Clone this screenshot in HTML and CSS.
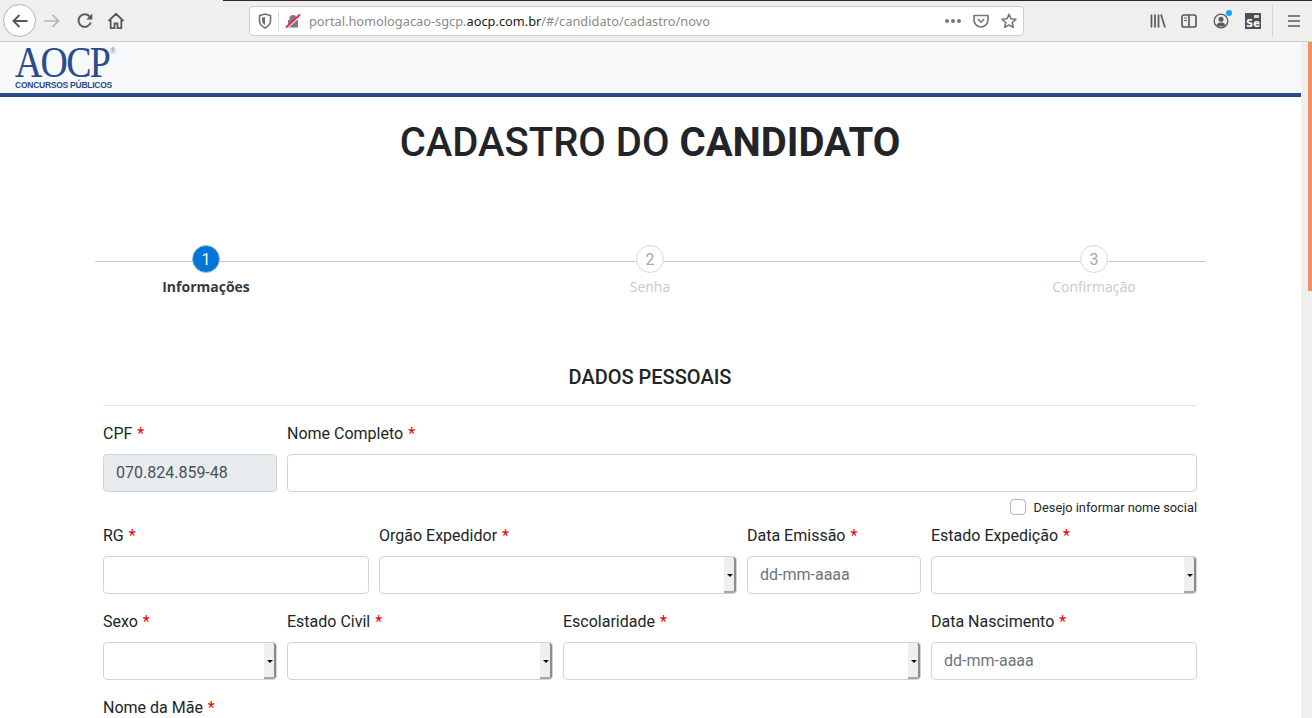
FILE: index.html
```html
<!DOCTYPE html>
<html lang="pt-BR">
<head>
    <meta charset="UTF-8">
    <meta name="viewport" content="width=device-width, initial-scale=1.0">
    <title>Cadastro do Candidato</title>
    <link rel="stylesheet" href="styles.css">
</head>
<body>
    <div class="toolbar">
        <button class="nav-back" type="button">
            <svg width="18" height="18" viewBox="0 0 18 18"><path d="M16.500 9H2.500M8.500 3 2.500 9l6 6" fill="none" stroke="#555" stroke-width="1.900"/></svg>
        </button>
        <span class="nav-icon nav-forward">
            <svg width="18" height="18" viewBox="0 0 18 18"><path d="M1 9h14.500M9.500 3l6 6-6 6" fill="none" stroke="#b4b4b4" stroke-width="1.700"/></svg>
        </span>
        <span class="nav-icon nav-reload">
            <svg width="18" height="18" viewBox="0 0 18 18"><path d="M14.800 10.500A6.300 6.300 0 1 1 13.500 4.300L15.500 6.500" fill="none" stroke="#5b5b5b" stroke-width="1.900"/><path d="M16.300 1.500v6h-6z" fill="#5b5b5b"/></svg>
        </span>
        <span class="nav-icon nav-home">
            <svg width="18" height="18" viewBox="0 0 18 18"><path d="M1.500 9 9 1.800 16.500 9M3.700 8v8.200h3.800v-4.700h3v4.700h3.800V8" fill="none" stroke="#5b5b5b" stroke-width="1.800"/></svg>
        </span>
        <div class="urlbar">
            <svg class="url-shield" width="14" height="16" viewBox="0 0 14 16"><path d="M1.500 2.500 7 1l5.500 1.500V8c0 3-2.500 5.500-5.500 7C4 13.500 1.500 11 1.500 8z" fill="none" stroke="#707070" stroke-width="1.600"/><path d="M7 4v8C5.300 11 4 9.500 4 7.500V4.500z" fill="#707070"/></svg>
            <span class="url-sep"></span>
            <svg class="url-lock" width="16" height="16" viewBox="0 0 16 16"><path d="M4.500 7V5.500a3.500 3.500 0 0 1 7 0V7h1.500v7.500H3V7z" fill="#7a7a7a"/><path d="M1 15.500 15 2.500" stroke="#fff" stroke-width="2.500"/><path d="M1 14.500 15 1.500" stroke="#f0244f" stroke-width="2"/></svg>
            <span class="url-text">portal.homologacao-sgcp.<b>aocp.com.br</b>/#/candidato/cadastro/novo</span>
            <span class="url-dots"><i></i><i></i><i></i></span>
            <svg class="url-pocket" width="16" height="16" viewBox="0 0 16 16"><path d="M1 2.500h14V7a7 7 0 0 1-14 0z" fill="none" stroke="#777" stroke-width="1.700" stroke-linejoin="round"/><path d="M4.800 6 8 9l3.200-3" fill="none" stroke="#777" stroke-width="1.700"/></svg>
            <svg class="url-star" width="16" height="16" viewBox="0 0 16 16"><path d="M8 1.300l2 4.500 4.900.5-3.700 3.200 1.100 4.900L8 12l-4.300 2.400 1.100-4.900L1.100 6.300 6 5.800z" fill="none" stroke="#777" stroke-width="1.600" stroke-linejoin="round"/></svg>
        </div>
        <div class="tools">
            <svg width="16" height="16" viewBox="0 0 16 16"><path d="M1.500 1.500v13M5 1.500v13M8.500 1.500v13M11 1.500l4 13" fill="none" stroke="#5b5b5b" stroke-width="1.700"/></svg>
            <svg class="tool-sidebar" width="16" height="16" viewBox="0 0 16 16"><rect x="1" y="2" width="14" height="12" rx="2" fill="none" stroke="#5b5b5b" stroke-width="1.700"/><path d="M8 2v12" stroke="#5b5b5b" stroke-width="1.700"/><path d="M3 5h3M3 7.500h3" stroke="#5b5b5b" stroke-width="1.200"/></svg>
            <span class="tool-account">
                <svg width="16" height="16" viewBox="0 0 16 16"><circle cx="8" cy="8" r="6.800" fill="none" stroke="#5b5b5b" stroke-width="1.300"/><circle cx="8" cy="6.300" r="2.500" fill="#5b5b5b"/><path d="M3.500 12c1-2 2.700-2.500 4.500-2.500s3.500.5 4.500 2.500c-2.500 2-6.500 2-9 0z" fill="#5b5b5b"/></svg>
                <i class="badge"></i>
            </span>
            <span class="tool-se">Se</span>
            <span class="tool-sep"></span>
            <svg class="tool-menu" width="14" height="14" viewBox="0 0 14 14"><path d="M1 2h12M1 7h12M1 12h12" stroke="#5b5b5b" stroke-width="1.700"/></svg>
        </div>
    </div>

    <div class="viewport">
        <div class="page">
            <header class="site-header">
                <div class="logo">
                    <div class="logo-mark">AOCP<sup>®</sup></div>
                    <div class="logo-sub">CONCURSOS PÚBLICOS</div>
                </div>
            </header>

            <div class="container">
                <h1>CADASTRO DO <strong>CANDIDATO</strong></h1>

                <div class="steps">
                    <div class="step active"><span class="step-num">1</span><span class="step-label">Informações</span></div>
                    <div class="step"><span class="step-num">2</span><span class="step-label">Senha</span></div>
                    <div class="step"><span class="step-num">3</span><span class="step-label">Confirmação</span></div>
                </div>

                <form class="form">
                    <h2>DADOS PESSOAIS</h2>
                    <div class="form-grid">
                        <div class="field col-2">
                            <label>CPF <em>*</em></label>
                            <input class="input" type="text" value="070.824.859-48" disabled>
                        </div>
                        <div class="field col-10">
                            <label>Nome Completo <em>*</em></label>
                            <input class="input" type="text">
                            <div class="social">
                                <span class="checkbox"></span>
                                <span>Desejo informar nome social</span>
                            </div>
                        </div>

                        <div class="field col-3">
                            <label>RG <em>*</em></label>
                            <input class="input" type="text">
                        </div>
                        <div class="field col-4">
                            <label>Orgão Expedidor <em>*</em></label>
                            <div class="select"><span class="select-arrow"></span></div>
                        </div>
                        <div class="field col-2">
                            <label>Data Emissão <em>*</em></label>
                            <input class="input" type="text" placeholder="dd-mm-aaaa">
                        </div>
                        <div class="field col-3">
                            <label>Estado Expedição <em>*</em></label>
                            <div class="select"><span class="select-arrow"></span></div>
                        </div>

                        <div class="field col-2">
                            <label>Sexo <em>*</em></label>
                            <div class="select"><span class="select-arrow"></span></div>
                        </div>
                        <div class="field col-3">
                            <label>Estado Civil <em>*</em></label>
                            <div class="select"><span class="select-arrow"></span></div>
                        </div>
                        <div class="field col-4">
                            <label>Escolaridade <em>*</em></label>
                            <div class="select"><span class="select-arrow"></span></div>
                        </div>
                        <div class="field col-3">
                            <label>Data Nascimento <em>*</em></label>
                            <input class="input" type="text" placeholder="dd-mm-aaaa">
                        </div>

                        <div class="field col-12">
                            <label>Nome da Mãe <em>*</em></label>
                            <input class="input" type="text">
                        </div>
                    </div>
                </form>
            </div>
        </div>
        <div class="scrollbar"><div class="scroll-thumb"></div></div>
    </div>
</body>
</html>
```

FILE: styles.css
```css
html, body {
    height: 100%;
}

body {
    margin: 0;
    overflow: hidden;
    display: flex;
    flex-direction: column;
    font-family: 'Roboto', 'Liberation Sans', sans-serif;
    color: #212529;
    background: #fff;
}

/* browser chrome */
.toolbar {
    position: relative;
    flex: none;
    height: 41px;
    display: flex;
    align-items: center;
    padding-left: 3px;
    background: #f0efed;
    border-bottom: 1px solid #cfcdca;
}

.toolbar::before {
    content: "";
    position: absolute;
    top: 0;
    left: 223px;
    right: 0;
    height: 1px;
    background: #2d2b28;
}

.nav-back {
    width: 33px;
    height: 33px;
    padding: 0;
    border: 1px solid #b4b2af;
    border-radius: 50%;
    background: #fff;
    display: flex;
    align-items: center;
    justify-content: center;
}

.nav-icon {
    display: flex;
    width: 18px;
    height: 18px;
}

.nav-forward { margin-left: 7px; }
.nav-reload { margin-left: 15px; }
.nav-home { margin-left: 13px; }

.urlbar {
    width: 775px;
    height: 30px;
    margin-left: 124px;
    box-sizing: border-box;
    display: flex;
    align-items: center;
    background: #fff;
    border: 1px solid #cfcdca;
    border-radius: 4px;
}

.url-shield { margin-left: 8px; }

.url-sep {
    width: 1px;
    height: 20px;
    margin-left: 6px;
    background: #d8d8d8;
}

.url-lock { margin-left: 6px; }

.url-text {
    margin-left: 8px;
    font-family: 'Noto Sans', sans-serif;
    font-size: 12.8px;
    color: #8a8a8a;
    white-space: nowrap;
}

.url-text b {
    font-weight: 400;
    color: #1c1b22;
}

.url-dots {
    margin-left: auto;
    display: flex;
    gap: 2px;
}

.url-dots i {
    width: 4px;
    height: 4px;
    border-radius: 50%;
    background: #777;
}

.url-pocket { margin-left: 12px; }
.url-star { margin: 0 6px 0 12px; }

.tools {
    display: flex;
    align-items: center;
    margin-left: 126px;
    gap: 16px;
}

.tool-sidebar { margin-left: -1px; }

.tool-account {
    position: relative;
    display: flex;
}

.badge {
    position: absolute;
    top: -3px;
    right: -3px;
    width: 6px;
    height: 6px;
    border-radius: 50%;
    background: #0aa5ff;
}

.tool-se {
    position: relative;
    width: 16px;
    height: 16px;
    display: flex;
    align-items: flex-end;
    justify-content: center;
    background: #505050;
    color: #fff;
    font-family: 'DejaVu Sans', sans-serif;
    font-size: 10px;
    font-weight: 700;
    line-height: 11px;
}

.tool-se::before {
    content: "";
    position: absolute;
    top: 2px;
    right: 2px;
    width: 5px;
    height: 3px;
    background: #d5d5d5;
}

.tool-sep {
    width: 1px;
    height: 32px;
    margin-left: -5px;
    background: #d8d6d3;
}

.tool-menu { margin-left: -2px; }

/* page area */
.viewport {
    flex: 1;
    min-height: 0;
    display: flex;
}

.page {
    flex: 1;
    min-width: 0;
    overflow: hidden;
}

.scrollbar {
    position: relative;
    flex: none;
    width: 11px;
    background: #f0efed;
}

.scroll-thumb {
    position: absolute;
    top: 0;
    right: 0;
    width: 4px;
    height: 249px;
    background: #f28d66;
}

.site-header {
    height: 51px;
    padding-left: 15px;
    background: #f8f9fa;
    border-bottom: 4px solid #2a4b8d;
}

.logo {
    color: #2a4b8d;
    width: 110px;
    padding-top: 2px;
}

.logo-mark {
    height: 36px;
    font-family: 'Liberation Serif', serif;
    font-size: 45px;
    line-height: 36px;
    letter-spacing: -2px;
    white-space: nowrap;
    transform: scaleX(.84);
    transform-origin: left center;
    -webkit-text-stroke: .15px #2a4b8d;
}

.logo-mark sup {
    font-family: 'Liberation Sans', sans-serif;
    font-size: 9px;
    font-weight: 400;
    letter-spacing: 0;
    line-height: 0;
    vertical-align: 23px;
    margin-left: 1px;
    -webkit-text-stroke: 0;
    color: #6f86b3;
}

.logo-sub {
    font-family: 'Liberation Sans', sans-serif;
    font-size: 8.5px;
    font-weight: 700;
    letter-spacing: -.25px;
    line-height: 10px;
    white-space: nowrap;
}

.container {
    width: 1110px;
    margin-left: 95px;
}

h1 {
    margin: 22px 0 0;
    font-size: 40px;
    font-weight: 500;
    line-height: 48px;
    text-align: center;
}

h1 strong {
    font-weight: 700;
}

.steps {
    position: relative;
    display: flex;
    justify-content: space-between;
    margin-top: 78px;
}

.steps::before {
    content: "";
    position: absolute;
    top: 16px;
    left: 0;
    right: 0;
    height: 1px;
    background: #c6c6c6;
}

.step {
    position: relative;
    width: 222px;
    display: flex;
    flex-direction: column;
    align-items: center;
    color: #c9c9c9;
}

.step-num {
    width: 28px;
    height: 28px;
    box-sizing: border-box;
    display: flex;
    align-items: center;
    justify-content: center;
    background: #fff;
    border: 1px solid #d9d9d9;
    border-radius: 50%;
    font-size: 16px;
    color: #a8a8a8;
}

.step-label {
    margin-top: 4px;
    font-family: 'Open Sans', sans-serif;
    font-size: 14px;
    line-height: 20px;
}

.step.active {
    color: #343a40;
}

.step.active .step-num {
    background: #0275d8;
    border-color: #a9bccd;
    color: #fff;
}

.step.active .step-label {
    font-weight: 700;
}

.form {
    width: 1094px;
    margin: 0 auto;
}

h2 {
    margin: 68px 0 0;
    padding-bottom: 16px;
    font-size: 20px;
    font-weight: 500;
    line-height: 24px;
    text-align: center;
    border-bottom: 1px solid #dee2e6;
}

.form-grid {
    display: grid;
    grid-template-columns: repeat(12, 1fr);
    column-gap: 10px;
    margin-top: 16px;
}

.col-2 { grid-column: span 2; }
.col-3 { grid-column: span 3; }
.col-4 { grid-column: span 4; }
.col-10 { grid-column: span 10; }
.col-12 { grid-column: span 12; }

.field {
    margin-bottom: 16px;
    min-width: 0;
}

label {
    display: block;
    margin-bottom: 8px;
    font-size: 16px;
    line-height: 24px;
}

label em {
    margin-left: 1px;
    font-style: normal;
    color: #ee0000;
}

.input {
    display: block;
    width: 100%;
    height: 38px;
    box-sizing: border-box;
    padding: 5px 12px 7px;
    font-family: inherit;
    font-size: 16px;
    color: #495057;
    background: #fff;
    border: 1px solid #ced4da;
    border-radius: 4px;
    outline: none;
}

.input:disabled {
    background: #e9ecef;
}

.input::placeholder {
    color: #6c757d;
    opacity: 1;
}

.select {
    height: 38px;
    box-sizing: border-box;
    display: flex;
    justify-content: flex-end;
    background: #fff;
    border: 1px solid #ced4da;
    border-radius: 4px;
}

.select-arrow {
    width: 12px;
    position: relative;
    background: #efefef;
    border-right: 2px solid #8c8c8c;
    border-bottom: 2px solid #a6a6a6;
    border-radius: 0 3px 3px 0;
    box-sizing: border-box;
}

.select-arrow::after {
    content: "";
    position: absolute;
    top: 17px;
    left: 3px;
    border: 3px solid transparent;
    border-top: 3px solid #111;
    border-bottom: 0;
}

.social {
    display: flex;
    justify-content: flex-end;
    align-items: center;
    gap: 8px;
    height: 18px;
    margin-top: 6px;
    margin-bottom: -8px;
    font-size: 12.8px;
}

.checkbox {
    width: 16px;
    height: 16px;
    box-sizing: border-box;
    background: #fff;
    border: 1px solid #adb5bd;
    border-radius: 4px;
}
```
